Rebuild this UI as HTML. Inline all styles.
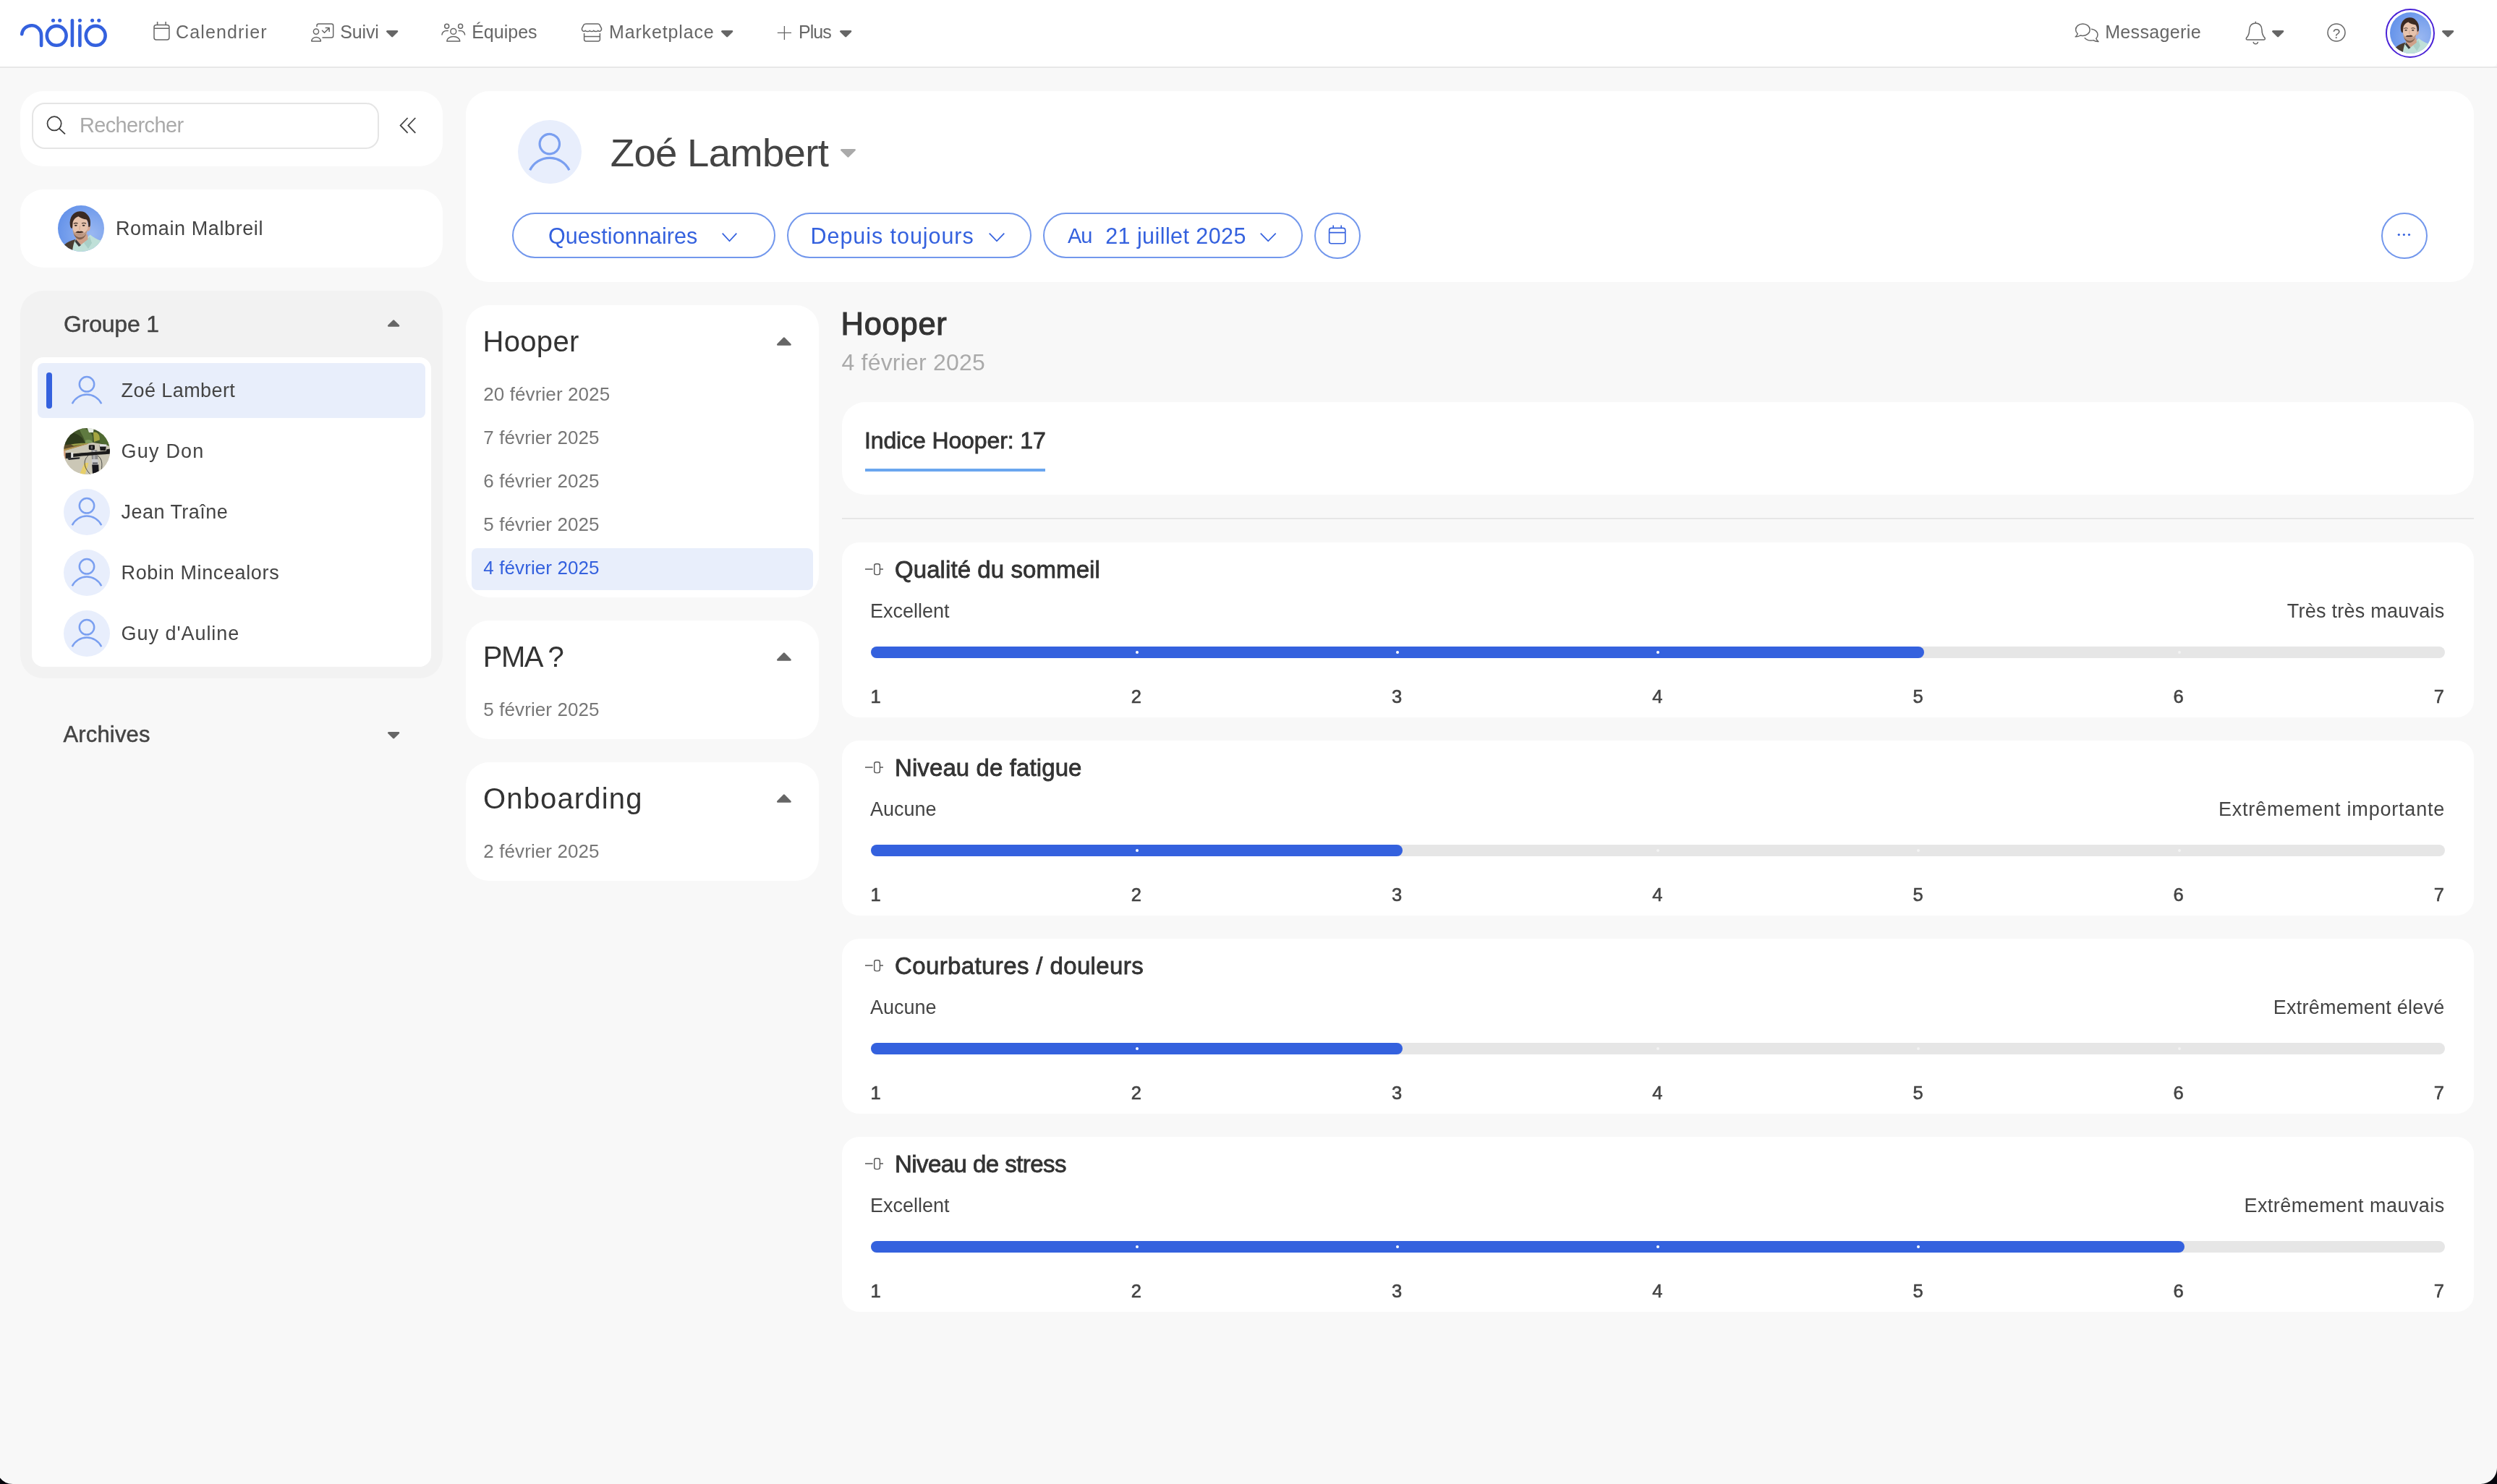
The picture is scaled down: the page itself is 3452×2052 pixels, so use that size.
<!DOCTYPE html>
<html lang="fr"><head><meta charset="utf-8"><title>Nolio</title>
<style>
html,body{margin:0;padding:0;overflow:hidden;}
html{width:3452px;height:2052px;}
body{width:3452px;height:2052px;position:relative;overflow:hidden;background:#f8f8f8;font-family:"Liberation Sans",sans-serif;}
.b{position:absolute;display:block;box-sizing:border-box;}
.t{position:absolute;white-space:nowrap;margin:0;padding:0;}
</style></head><body><div id="app" style="position:absolute;left:0;top:0;width:3452px;height:2052px;will-change:transform;overflow:hidden;">
<div class="b" style="left:0px;top:0px;width:3452px;height:92px;background:#fff;border-radius:0px;border-bottom-right-radius:6px;"></div>
<div class="b" style="left:0px;top:92px;width:3452px;height:2px;background:#e7e7e7;border-radius:0px;"></div>
<svg class="b" style="left:20px;top:15px;" width="140" height="60" viewBox="0 0 140 60"><g fill="none" stroke="#3461de" stroke-width="4.6" stroke-linecap="round">
<path d="M10.2 32.2 A13.5 13.5 0 0 1 37.1 34.3 L37.1 47.9"/>
<circle cx="58.2" cy="34.35" r="13.45"/>
<path d="M79.9 13.3 L79.9 47.9"/>
<path d="M90.4 20.9 L90.4 47.9"/>
<circle cx="112.2" cy="34.35" r="13.45"/>
</g><g fill="#3461de">
<circle cx="53.5" cy="13.3" r="2.55"/><circle cx="62.7" cy="13.3" r="2.55"/>
<circle cx="90.4" cy="13.3" r="2.55"/>
<circle cx="107.6" cy="13.3" r="2.55"/><circle cx="116.8" cy="13.3" r="2.55"/></g></svg>
<svg class="b" style="left:210px;top:28px;" width="28" height="30" viewBox="0 0 28 30"><g fill="none" stroke="#666" stroke-width="1.5" stroke-linejoin="round">
<rect x="3" y="6.4" width="20.9" height="20.7" rx="3"/>
<path d="M3 11.2 H23.9 M7.6 2 V6.4 M19.1 2 V6.4"/></g></svg>
<div class="t" style="font-size:25px;line-height:25px;top:32.33px;color:#666;letter-spacing:1.15px;left:243.00px;">Calendrier</div>
<svg class="b" style="left:428px;top:30px;" width="36" height="30" viewBox="0 0 36 30"><g fill="none" stroke="#666" stroke-width="1.5" stroke-linejoin="round" stroke-linecap="round">
<path d="M10 6.5 V5.5 a2.5 2.5 0 0 1 2.5 -2.5 H30.2 a2.5 2.5 0 0 1 2.5 2.5 V19.5 a2.5 2.5 0 0 1 -2.5 2.5 H18"/>
<circle cx="9" cy="13.6" r="3.6"/>
<path d="M2.8 27 a6.3 5.6 0 0 1 12.6 0 Z"/>
<path d="M17.5 12.2 L20.5 15.2 L27 8.8 M22.3 8.6 H27.2 V13.4"/></g></svg>
<div class="t" style="font-size:25px;line-height:25px;top:32.33px;color:#666;letter-spacing:-0.15px;left:470.30px;">Suivi</div>
<svg class="b" style="left:533.2px;top:41.0px;" width="18.3" height="11.8" viewBox="0 0 18.3 11.8"><path d="M2.3 2.3 H16.0 L9.15 9.175 Z" fill="#666" stroke="#666" stroke-width="2.6" stroke-linejoin="round"/></svg>
<svg class="b" style="left:608px;top:30px;" width="38" height="30" viewBox="0 0 38 30"><g fill="none" stroke="#666" stroke-width="1.5" stroke-linecap="round" stroke-linejoin="round">
<circle cx="18.8" cy="13.4" r="3.9"/>
<path d="M9.8 27 a9 6.6 0 0 1 18 0 Z"/>
<circle cx="9.7" cy="6.3" r="3.0"/>
<circle cx="28.6" cy="6.3" r="3.0"/>
<path d="M3 18 a6.2 5.6 0 0 1 6.2 -5.4 h2.2"/>
<path d="M34.6 18 a6.2 5.6 0 0 0 -6.2 -5.4 h-2.2"/></g></svg>
<div class="t" style="font-size:25px;line-height:25px;top:32.33px;color:#666;left:652.20px;">Équipes</div>
<svg class="b" style="left:803px;top:30px;" width="32" height="30" viewBox="0 0 32 30"><g fill="none" stroke="#666" stroke-width="1.5" stroke-linejoin="round" stroke-linecap="round">
<path d="M7.4 3 H23.6 Q25.2 3 26 4.4 L28.3 8.8 Q29.2 11.4 27.2 12.9 Q25.4 13.9 23.6 12.4 Q22.6 13.6 20.6 13.6 Q18.8 13.6 17.6 12.4 Q16.6 13.6 15.1 13.6 Q13.4 13.6 12.3 12.4 Q11.2 13.6 9.4 13.6 Q7.4 13.6 6.4 12.4 Q4.6 13.9 2.8 12.9 Q0.8 11.4 1.7 8.8 L4 4.4 Q4.8 3 7.4 3 Z"/>
<path d="M4.6 16.4 V24.5 a2.4 2.4 0 0 0 2.4 2.4 H24 a2.4 2.4 0 0 0 2.4 -2.4 V16.4 M4.6 20.6 H26.4"/></g></svg>
<div class="t" style="font-size:25px;line-height:25px;top:32.33px;color:#666;letter-spacing:0.85px;left:842.00px;">Marketplace</div>
<svg class="b" style="left:995.6px;top:41.0px;" width="18.3" height="11.8" viewBox="0 0 18.3 11.8"><path d="M2.3 2.3 H16.0 L9.15 9.175 Z" fill="#666" stroke="#666" stroke-width="2.6" stroke-linejoin="round"/></svg>
<svg class="b" style="left:1072px;top:33px;" width="26" height="26" viewBox="0 0 26 26"><path d="M2.8 12.4 H22 M12.4 3 V22" fill="none" stroke="#666" stroke-width="1.3"/></svg>
<div class="t" style="font-size:25px;line-height:25px;top:32.33px;color:#666;letter-spacing:-1.0px;left:1104.00px;">Plus</div>
<svg class="b" style="left:1159.9px;top:41.0px;" width="18.3" height="11.8" viewBox="0 0 18.3 11.8"><path d="M2.3 2.3 H16.0 L9.15 9.175 Z" fill="#666" stroke="#666" stroke-width="2.6" stroke-linejoin="round"/></svg>
<svg class="b" style="left:2866px;top:30px;" width="38" height="30" viewBox="0 0 38 30"><g fill="none" stroke="#666" stroke-width="1.5" stroke-linejoin="round" stroke-linecap="round">
<path d="M13.4 3 C7.8 3 3.6 6.6 3.6 11 C3.6 13.2 4.6 15.2 6.2 16.6 C5.8 18.4 4.8 19.8 3.2 20.8 C6 20.9 8.2 20.2 10 19 C11 19.3 12.2 19.4 13.4 19.4 C19 19.4 23.2 15.6 23.2 11 C23.2 6.6 19 3 13.4 3 Z"/>
<path d="M25.6 10.2 C30.4 10.8 34 14 34 18 C34 20 33.2 21.8 31.8 23.2 C32.4 24.9 33.4 26.3 35 27.5 C32.2 27.6 29.8 26.9 28 25.6 C27 25.9 25.8 26 24.6 26 C21 26 17.8 24.6 16.2 22.6"/></g></svg>
<div class="t" style="font-size:25px;line-height:25px;top:32.33px;color:#666;letter-spacing:0.35px;left:2910.20px;">Messagerie</div>
<svg class="b" style="left:3102px;top:27px;" width="34" height="38" viewBox="0 0 34 38"><g fill="none" stroke="#666" stroke-width="1.5" stroke-linejoin="round" stroke-linecap="round">
<path d="M16.3 3.2 V5 M16.3 5 C10.6 5 7.6 9.4 7.6 14.6 C7.6 19.4 6.6 22.4 3.6 25.4 Q2.6 27.8 4.8 28.1 H27.8 Q30 27.8 29 25.4 C26 22.4 25 19.4 25 14.6 C25 9.4 22 5 16.3 5 Z"/>
<path d="M13.2 31.4 a3.2 3.2 0 0 0 6.2 0"/></g></svg>
<svg class="b" style="left:3139.7px;top:41.0px;" width="18.3" height="11.8" viewBox="0 0 18.3 11.8"><path d="M2.3 2.3 H16.0 L9.15 9.175 Z" fill="#666" stroke="#666" stroke-width="2.6" stroke-linejoin="round"/></svg>
<svg class="b" style="left:3214px;top:29px;" width="32" height="32" viewBox="0 0 32 32"><circle cx="16" cy="16" r="12" fill="none" stroke="#666" stroke-width="1.5"/></svg>
<div class="t" style="font-size:19px;line-height:19px;top:37.21px;color:#666;left:3170.00px;width:120px;text-align:center;">?</div>
<div class="b" style="left:3298px;top:11.7px;width:68px;height:68px;background:transparent;border-radius:34px;border:2.4px solid #4a22d6;"></div>
<svg class="b" style="left:3303.5px;top:17.2px;" width="57" height="57" viewBox="0 0 64 64"><defs><clipPath id="c3303"><circle cx="32" cy="32" r="32"/></clipPath>
<radialGradient id="g3303" cx="0.72" cy="0.62" r="0.75"><stop offset="0" stop-color="#9ab8f1"/><stop offset="1" stop-color="#6593ea"/></radialGradient>
<filter id="f3303" x="-10%" y="-10%" width="120%" height="120%"><feGaussianBlur stdDeviation="0.55"/></filter></defs>
<g clip-path="url(#c3303)"><rect width="64" height="64" fill="url(#g3303)"/>
<g filter="url(#f3303)">
<path d="M9 54.5 C13 50.5 19 48.5 24 47 L30 66 H10 Z" fill="#4a3d31"/>
<path d="M20 64 C21 55 22.5 50 24.5 47 C30 50 36 48 41 44 L44.5 40.5 C49 44 54 47 59 48.6 L64 50 V66 H20 Z" fill="#bfe0d8"/>
<path d="M36 52 L44 43 L47 52 L42 60 Z" fill="#a9cfc7"/>
<path d="M25 44 L41 40 L41.5 47 L32 54.5 L25 49 Z" fill="#cfa088"/>
<path d="M25 47 L32 55 L29 57 L23.5 50 Z" fill="#3b3a3a"/>
<path d="M41.3 28 C44 26.5 45.5 29 44.6 32 C44 35 42.5 36 41 35.5 Z" fill="#d9a88f"/>
<path d="M20 24 C20 16 25 13 31 13.5 C38 14 41.5 19 41.5 27 C41.5 34 40.5 39 38 42.5 C35.5 46 32.5 47 30 47 C27 47 24.5 45 22.5 41 C20.8 37.5 20 31 20 24 Z" fill="#e7c3ac"/>
<path d="M20.6 33 C21 41 25 47.2 30.2 47.2 C35.5 47.2 40 41.5 41 33 C39 37 36 38.6 33.5 38.9 L35.7 37.3 C33.6 35.4 31.2 35.6 30 36.2 C28.8 35.6 26.5 35.4 24.1 37.6 L26.5 38.9 C24 38.6 22 37 20.6 33 Z" fill="#8a6654" opacity=".45"/>
<path d="M21.5 38 C23 44 27 47.2 30.2 47.2 C33.5 47.2 37.5 44.5 39.5 39 C37.5 42.5 34 44.3 30.5 44.3 C27 44.3 23.5 42 21.5 38 Z" fill="#6f5142" opacity=".8"/>
<path d="M16.8 27 C15.6 17 21 8.8 30 8.2 C35 7.9 38 9.5 40 12 C44 15.5 45.6 21 44.9 27 C44.6 29.5 43.2 30.6 42.3 29.5 C42.4 24.5 41.5 21.5 39.5 19.5 C35.5 18.8 31 17.5 28.5 15.2 C25 16.5 21.6 19 20.6 24 C20.2 28 20.4 30.5 19.6 32 C18 31.6 17.1 29.8 16.8 27 Z" fill="#3a2a23"/>
<path d="M24.1 37.6 C26.5 35.4 28.8 35.6 30 36.2 C31.2 35.6 33.6 35.4 35.7 37.3 C33.5 37.9 31.5 38 30 38 C28.3 38 26 38.1 24.1 37.6 Z" fill="#38251f"/>
<path d="M27 39.6 C29 40.4 31.2 40.4 33 39.6 C31.5 40.9 28.6 40.9 27 39.6 Z" fill="#b8746c"/>
<path d="M21.8 25.3 C23.6 24.2 26 24.2 27.6 25 M33 25 C34.8 24.1 37.2 24.2 39 25.3" stroke="#3a2a23" stroke-width="1.1" fill="none"/>
<ellipse cx="24.8" cy="27.8" rx="1.9" ry="0.95" fill="#2e2522"/><ellipse cx="35.6" cy="27.8" rx="1.9" ry="0.95" fill="#2e2522"/>
<path d="M30.6 28 C30 31 29.6 33 30.4 34.2" stroke="#caa08a" stroke-width="0.9" fill="none"/>
</g></g></svg>
<svg class="b" style="left:3374.7px;top:41.0px;" width="18.3" height="11.8" viewBox="0 0 18.3 11.8"><path d="M2.3 2.3 H16.0 L9.15 9.175 Z" fill="#666" stroke="#666" stroke-width="2.6" stroke-linejoin="round"/></svg>
<div class="b" style="left:28px;top:126px;width:584px;height:104px;background:#fff;border-radius:32px;"></div>
<div class="b" style="left:44px;top:142px;width:480px;height:64px;background:#fff;border-radius:18px;border:2px solid #e5e5e5;"></div>
<svg class="b" style="left:60px;top:156px;" width="36" height="36" viewBox="0 0 36 36"><circle cx="15.1" cy="14.8" r="9.6" fill="none" stroke="#3c3c3c" stroke-width="1.75"/><path d="M22 21.8 L30 29.4" stroke="#3c3c3c" stroke-width="1.75" fill="none"/></svg>
<div class="t" style="font-size:29px;line-height:29px;top:159.45px;color:#aaa;letter-spacing:-0.65px;left:110.00px;">Rechercher</div>
<svg class="b" style="left:550px;top:160px;" width="28" height="28" viewBox="0 0 28 28"><path d="M13.6 3 L3.6 13.4 L13.6 23.8 M24.3 3 L14.3 13.4 L24.3 23.8" fill="none" stroke="#444" stroke-width="1.8"/></svg>
<div class="b" style="left:28px;top:262px;width:584px;height:108px;background:#fff;border-radius:32px;"></div>
<svg class="b" style="left:80px;top:284px;" width="64" height="64" viewBox="0 0 64 64"><defs><clipPath id="c80"><circle cx="32" cy="32" r="32"/></clipPath>
<radialGradient id="g80" cx="0.72" cy="0.62" r="0.75"><stop offset="0" stop-color="#9ab8f1"/><stop offset="1" stop-color="#6593ea"/></radialGradient>
<filter id="f80" x="-10%" y="-10%" width="120%" height="120%"><feGaussianBlur stdDeviation="0.55"/></filter></defs>
<g clip-path="url(#c80)"><rect width="64" height="64" fill="url(#g80)"/>
<g filter="url(#f80)">
<path d="M9 54.5 C13 50.5 19 48.5 24 47 L30 66 H10 Z" fill="#4a3d31"/>
<path d="M20 64 C21 55 22.5 50 24.5 47 C30 50 36 48 41 44 L44.5 40.5 C49 44 54 47 59 48.6 L64 50 V66 H20 Z" fill="#bfe0d8"/>
<path d="M36 52 L44 43 L47 52 L42 60 Z" fill="#a9cfc7"/>
<path d="M25 44 L41 40 L41.5 47 L32 54.5 L25 49 Z" fill="#cfa088"/>
<path d="M25 47 L32 55 L29 57 L23.5 50 Z" fill="#3b3a3a"/>
<path d="M41.3 28 C44 26.5 45.5 29 44.6 32 C44 35 42.5 36 41 35.5 Z" fill="#d9a88f"/>
<path d="M20 24 C20 16 25 13 31 13.5 C38 14 41.5 19 41.5 27 C41.5 34 40.5 39 38 42.5 C35.5 46 32.5 47 30 47 C27 47 24.5 45 22.5 41 C20.8 37.5 20 31 20 24 Z" fill="#e7c3ac"/>
<path d="M20.6 33 C21 41 25 47.2 30.2 47.2 C35.5 47.2 40 41.5 41 33 C39 37 36 38.6 33.5 38.9 L35.7 37.3 C33.6 35.4 31.2 35.6 30 36.2 C28.8 35.6 26.5 35.4 24.1 37.6 L26.5 38.9 C24 38.6 22 37 20.6 33 Z" fill="#8a6654" opacity=".45"/>
<path d="M21.5 38 C23 44 27 47.2 30.2 47.2 C33.5 47.2 37.5 44.5 39.5 39 C37.5 42.5 34 44.3 30.5 44.3 C27 44.3 23.5 42 21.5 38 Z" fill="#6f5142" opacity=".8"/>
<path d="M16.8 27 C15.6 17 21 8.8 30 8.2 C35 7.9 38 9.5 40 12 C44 15.5 45.6 21 44.9 27 C44.6 29.5 43.2 30.6 42.3 29.5 C42.4 24.5 41.5 21.5 39.5 19.5 C35.5 18.8 31 17.5 28.5 15.2 C25 16.5 21.6 19 20.6 24 C20.2 28 20.4 30.5 19.6 32 C18 31.6 17.1 29.8 16.8 27 Z" fill="#3a2a23"/>
<path d="M24.1 37.6 C26.5 35.4 28.8 35.6 30 36.2 C31.2 35.6 33.6 35.4 35.7 37.3 C33.5 37.9 31.5 38 30 38 C28.3 38 26 38.1 24.1 37.6 Z" fill="#38251f"/>
<path d="M27 39.6 C29 40.4 31.2 40.4 33 39.6 C31.5 40.9 28.6 40.9 27 39.6 Z" fill="#b8746c"/>
<path d="M21.8 25.3 C23.6 24.2 26 24.2 27.6 25 M33 25 C34.8 24.1 37.2 24.2 39 25.3" stroke="#3a2a23" stroke-width="1.1" fill="none"/>
<ellipse cx="24.8" cy="27.8" rx="1.9" ry="0.95" fill="#2e2522"/><ellipse cx="35.6" cy="27.8" rx="1.9" ry="0.95" fill="#2e2522"/>
<path d="M30.6 28 C30 31 29.6 33 30.4 34.2" stroke="#caa08a" stroke-width="0.9" fill="none"/>
</g></g></svg>
<div class="t" style="font-size:27px;line-height:27px;top:302.64px;color:#444;letter-spacing:0.6px;left:160.00px;">Romain Malbreil</div>
<div class="b" style="left:28px;top:402px;width:584px;height:536px;background:#f2f2f2;border-radius:32px;"></div>
<div class="t" style="font-size:32px;line-height:32px;top:431.81px;color:#444;letter-spacing:-0.2px;-webkit-text-stroke:0.45px #444;left:88.00px;">Groupe 1</div>
<svg class="b" style="left:534.8px;top:441.0px;" width="18.3" height="11.8" viewBox="0 0 18.3 11.8"><path d="M2.3 9.5 H16.0 L9.15 2.625 Z" fill="#666" stroke="#666" stroke-width="2.6" stroke-linejoin="round"/></svg>
<div class="b" style="left:44px;top:494px;width:552px;height:428px;background:#fff;border-radius:16px;"></div>
<div class="b" style="left:52px;top:502px;width:536px;height:76px;background:#e8eefb;border-radius:8px;"></div>
<div class="b" style="left:64px;top:515px;width:8px;height:50px;background:#3461de;border-radius:4px;"></div>
<svg class="b" style="left:80.0px;top:500.0px;" width="80.0" height="80.0" viewBox="0 0 80.0 80.0"><circle cx="40.00" cy="31.30" r="10.20" fill="none" stroke="#7a9ff0" stroke-width="2.5"/><path d="M19.80 58.20 A22.49 22.49 0 0 1 60.20 58.20" fill="none" stroke="#7a9ff0" stroke-width="2.5" stroke-linecap="butt"/></svg>
<div class="t" style="font-size:27px;line-height:27px;top:527.04px;color:#444;letter-spacing:0.42px;left:167.60px;">Zoé Lambert</div>
<svg class="b" style="left:88px;top:592px;" width="64" height="64" viewBox="0 0 64 64"><defs><clipPath id="cb"><circle cx="32" cy="32" r="32"/></clipPath>
<filter id="fb" x="-10%" y="-10%" width="120%" height="120%"><feGaussianBlur stdDeviation="0.7"/></filter>
<filter id="fb2" x="-10%" y="-10%" width="120%" height="120%"><feGaussianBlur stdDeviation="0.35"/></filter></defs>
<g clip-path="url(#cb)"><rect width="64" height="64" fill="#cbc7b6"/>
<g filter="url(#fb)">
<path d="M-2 -2 H66 V24 L40 20 L30 21 L-2 30 Z" fill="#43572a"/>
<path d="M-2 8 C8 4 18 6 26 14 L30 21 L-2 30 Z" fill="#2f3b1c"/>
<path d="M22 2 C30 -2 38 4 40 12 L40 20 L30 20 C28 12 24 8 22 2 Z" fill="#5f7a40"/>
<path d="M32 -2 H42 L41 6 L35 6 Z" fill="#e9efe6"/>
<path d="M41 6 C46 4 50 9 51 16 L42 19 Z" fill="#a5a640"/>
<path d="M48 2 C56 4 62 12 66 20 V26 L50 20 C50 12 49 6 48 2 Z" fill="#4f6a30"/>
<path d="M30 17 C34 15 39 16 40 20 L30 21 Z" fill="#7b9a58"/>
<path d="M-2 24 C8 22 20 21 30 21 L34 21.5 L-2 32 Z" fill="#5c4d2a"/>
<path d="M10 22.5 C18 21 26 20.5 33 20.8 L34 21.6 L14 24.5 Z" fill="#9aa04a"/>
<path d="M-2 29.6 L32 21.2 L35 21.8 L-2 32.4 Z" fill="#b3924f"/>
<path d="M-2 32.4 L35 21.8 L42 20.5 L66 26 V66 H-2 Z" fill="#cbc7b6"/>
<path d="M29 48 L34.5 48 L29 66 L21 66 Z" fill="#e7cf6b"/>
</g>
<g filter="url(#fb2)">
<path d="M34 38 C27 44 27 54 37 64 M47 38 C54 43 53 50 52.5 57" fill="none" stroke="#2a2a2a" stroke-width=".8"/>
<path d="M38.2 30 H46.2 L47.4 44 H39 Z" fill="#8d8d8d"/>
<path d="M40.5 31 H43 L43.6 43 H41 Z" fill="#b5b5b5"/>
<path d="M38.6 43 H47.6 L48 50.5 H39.4 Z" fill="#c9cacc"/>
<path d="M40 47.5 H47 V49.5 H40 Z" fill="#55565a"/>
<path d="M39.2 50.5 H48.2 L48.8 63 H40 Z" fill="#15151c"/>
<path d="M2 36.2 C12 35.4 30 33.8 66 31 V35.6 C40 37.4 20 39 11 40.2 L2.4 41.6 Z" fill="#1b1b1b"/>
<path d="M2 34.4 L10.4 33.8 V41 L2.6 42 Z" fill="#202020"/>
<path d="M10.2 33.6 L13.2 33.4 V40.8 L10.2 41.2 Z" fill="#e4e4e4"/>
<path d="M5 41.6 L22.5 40.2 L22 42.4 L7 44 Z" fill="#26282c"/>
<path d="M-1 31.5 H2.6 V43.5 H-1 Z" fill="#d7a07a"/>
<rect x="34.8" y="23.2" width="8.2" height="6.8" rx="1.4" fill="#141414"/>
<rect x="37.6" y="24.6" width="2.4" height="4" fill="#6d6d6d"/>
<path d="M49.6 23.4 H59 L58 31 H50.6 Z" fill="#1f1f1f"/>
<path d="M50 22.6 H59.4 L59 25.6 H50 Z" fill="#e3e5e8"/>
<path d="M59 29.5 L66 28 V33 L59 33 Z" fill="#1b1b1b"/>
</g></g></svg>
<div class="t" style="font-size:27px;line-height:27px;top:611.04px;color:#444;letter-spacing:1.2px;left:167.60px;">Guy Don</div>
<div class="b" style="left:88px;top:676px;width:64px;height:64px;background:#e8eefc;border-radius:32px;"></div>
<svg class="b" style="left:80.0px;top:668.0px;" width="80.0" height="80.0" viewBox="0 0 80.0 80.0"><circle cx="40.00" cy="31.30" r="10.20" fill="none" stroke="#7a9ff0" stroke-width="2.5"/><path d="M19.80 58.20 A22.49 22.49 0 0 1 60.20 58.20" fill="none" stroke="#7a9ff0" stroke-width="2.5" stroke-linecap="butt"/></svg>
<div class="t" style="font-size:27px;line-height:27px;top:695.04px;color:#444;letter-spacing:0.45px;left:167.60px;">Jean Traîne</div>
<div class="b" style="left:88px;top:760px;width:64px;height:64px;background:#e8eefc;border-radius:32px;"></div>
<svg class="b" style="left:80.0px;top:752.0px;" width="80.0" height="80.0" viewBox="0 0 80.0 80.0"><circle cx="40.00" cy="31.30" r="10.20" fill="none" stroke="#7a9ff0" stroke-width="2.5"/><path d="M19.80 58.20 A22.49 22.49 0 0 1 60.20 58.20" fill="none" stroke="#7a9ff0" stroke-width="2.5" stroke-linecap="butt"/></svg>
<div class="t" style="font-size:27px;line-height:27px;top:779.04px;color:#444;letter-spacing:0.63px;left:167.60px;">Robin Mincealors</div>
<div class="b" style="left:88px;top:844px;width:64px;height:64px;background:#e8eefc;border-radius:32px;"></div>
<svg class="b" style="left:80.0px;top:836.0px;" width="80.0" height="80.0" viewBox="0 0 80.0 80.0"><circle cx="40.00" cy="31.30" r="10.20" fill="none" stroke="#7a9ff0" stroke-width="2.5"/><path d="M19.80 58.20 A22.49 22.49 0 0 1 60.20 58.20" fill="none" stroke="#7a9ff0" stroke-width="2.5" stroke-linecap="butt"/></svg>
<div class="t" style="font-size:27px;line-height:27px;top:863.04px;color:#444;letter-spacing:0.95px;left:167.60px;">Guy d'Auline</div>
<div class="t" style="font-size:31px;line-height:31px;top:1000.25px;color:#444;letter-spacing:0.15px;-webkit-text-stroke:0.45px #444;left:87.50px;">Archives</div>
<svg class="b" style="left:534.8px;top:1011.0px;" width="18.3" height="11.8" viewBox="0 0 18.3 11.8"><path d="M2.3 2.3 H16.0 L9.15 9.175 Z" fill="#666" stroke="#666" stroke-width="2.6" stroke-linejoin="round"/></svg>
<div class="b" style="left:644px;top:126px;width:2776px;height:264px;background:#fff;border-radius:32px;"></div>
<div class="b" style="left:716px;top:166px;width:88px;height:88px;background:#e8eefc;border-radius:44px;"></div>
<svg class="b" style="left:706.2px;top:156.5px;" width="107.6" height="107.6" viewBox="0 0 107.6 107.6"><circle cx="53.80" cy="42.10" r="13.72" fill="none" stroke="#7a9ff0" stroke-width="3.2"/><path d="M26.63 78.28 A30.25 30.25 0 0 1 80.97 78.28" fill="none" stroke="#7a9ff0" stroke-width="3.2" stroke-linecap="butt"/></svg>
<div class="t" style="font-size:54.5px;line-height:54.5px;top:184.76px;color:#444;letter-spacing:-0.7px;left:843.80px;">Zoé Lambert</div>
<svg class="b" style="left:1160.8px;top:205.0px;" width="22.9" height="14.0" viewBox="0 0 22.9 14.0"><path d="M2.3 2.3 H20.599999999999998 L11.45 11.375 Z" fill="#aaa" stroke="#aaa" stroke-width="2.6" stroke-linejoin="round"/></svg>
<div class="b" style="left:708px;top:294.2px;width:364px;height:63.3px;background:#fff;border-radius:32px;border:2px solid #7297ec;"></div>
<div class="b" style="left:1088.4px;top:294.2px;width:337.4px;height:63.3px;background:#fff;border-radius:32px;border:2px solid #7297ec;"></div>
<div class="b" style="left:1442.2px;top:294.2px;width:358.4px;height:63.3px;background:#fff;border-radius:32px;border:2px solid #7297ec;"></div>
<div class="t" style="font-size:30.5px;line-height:30.5px;top:311.08px;color:#3461de;letter-spacing:0.1px;left:757.90px;">Questionnaires</div>
<svg class="b" style="left:996.3px;top:320.0px;" width="25" height="16" viewBox="0 0 25 16"><path d="M2.7 2.7 L12.5 13.3 L22.3 2.7" fill="none" stroke="#3461de" stroke-width="1.7" stroke-linecap="butt" stroke-linejoin="miter"/></svg>
<div class="t" style="font-size:30.5px;line-height:30.5px;top:311.08px;color:#3461de;letter-spacing:0.95px;left:1120.50px;">Depuis toujours</div>
<svg class="b" style="left:1365.3px;top:320.0px;" width="26.0" height="16" viewBox="0 0 26.0 16"><path d="M2.7 2.7 L13.0 13.3 L23.3 2.7" fill="none" stroke="#3461de" stroke-width="1.7" stroke-linecap="butt" stroke-linejoin="miter"/></svg>
<div class="t" style="font-size:29px;line-height:29px;top:312.35px;color:#3461de;letter-spacing:-1.0px;left:1476.00px;">Au</div>
<div class="t" style="font-size:30.5px;line-height:30.5px;top:311.08px;color:#3461de;letter-spacing:0.43px;left:1528.20px;">21 juillet 2025</div>
<svg class="b" style="left:1739.8px;top:320.0px;" width="26.4" height="16" viewBox="0 0 26.4 16"><path d="M2.7 2.7 L13.2 13.3 L23.7 2.7" fill="none" stroke="#3461de" stroke-width="1.7" stroke-linecap="butt" stroke-linejoin="miter"/></svg>
<div class="b" style="left:1817.3px;top:294.2px;width:63.6px;height:63.4px;background:#fff;border-radius:32px;border:2px solid #7297ec;"></div>
<svg class="b" style="left:1834px;top:308px;" width="30" height="32" viewBox="0 0 30 32"><g fill="none" stroke="#3461de" stroke-width="1.6" stroke-linejoin="round">
<rect x="3.6" y="7.4" width="22.2" height="21.4" rx="3"/><path d="M3.6 13.6 H25.8 M9.2 3.4 V7.4 M20.2 3.4 V7.4"/></g></svg>
<div class="b" style="left:3292px;top:294.2px;width:64px;height:63.4px;background:#fff;border-radius:32px;border:2px solid #7297ec;"></div>
<svg class="b" style="left:3310px;top:320px;" width="30" height="12" viewBox="0 0 30 12"><g fill="#3461de"><circle cx="6.3" cy="4.5" r="1.6"/><circle cx="13.4" cy="4.5" r="1.6"/><circle cx="20.5" cy="4.5" r="1.6"/></g></svg>
<div class="b" style="left:644px;top:422.2px;width:488px;height:403.6px;background:#fff;border-radius:32px;"></div>
<div class="t" style="font-size:40px;line-height:40px;top:452.33px;color:#333;letter-spacing:0.3px;left:667.60px;">Hooper</div>
<svg class="b" style="left:1073.0px;top:465.0px;" width="21.8" height="13.8" viewBox="0 0 21.8 13.8"><path d="M2.3 11.5 H19.5 L10.9 2.625 Z" fill="#666" stroke="#666" stroke-width="2.6" stroke-linejoin="round"/></svg>
<div class="b" style="left:651.5px;top:758px;width:472.5px;height:58px;background:#e8eefb;border-radius:8px;"></div>
<div class="t" style="font-size:26px;line-height:26px;top:531.79px;color:#777;letter-spacing:0.1px;left:668.30px;">20 février 2025</div>
<div class="t" style="font-size:26px;line-height:26px;top:591.89px;color:#777;letter-spacing:0.1px;left:668.30px;">7 février 2025</div>
<div class="t" style="font-size:26px;line-height:26px;top:651.99px;color:#777;letter-spacing:0.1px;left:668.30px;">6 février 2025</div>
<div class="t" style="font-size:26px;line-height:26px;top:712.09px;color:#777;letter-spacing:0.1px;left:668.30px;">5 février 2025</div>
<div class="t" style="font-size:26px;line-height:26px;top:772.19px;color:#3461de;letter-spacing:0.1px;left:668.30px;">4 février 2025</div>
<div class="b" style="left:644px;top:858.1px;width:488px;height:163.8px;background:#fff;border-radius:32px;"></div>
<div class="t" style="font-size:40px;line-height:40px;top:888.13px;color:#333;letter-spacing:-1.5px;left:667.80px;">PMA ?</div>
<svg class="b" style="left:1073.0px;top:901.2px;" width="21.8" height="13.8" viewBox="0 0 21.8 13.8"><path d="M2.3 11.5 H19.5 L10.9 2.625 Z" fill="#666" stroke="#666" stroke-width="2.6" stroke-linejoin="round"/></svg>
<div class="t" style="font-size:26px;line-height:26px;top:968.29px;color:#777;letter-spacing:0.1px;left:668.30px;">5 février 2025</div>
<div class="b" style="left:644px;top:1054.3px;width:488px;height:163.6px;background:#fff;border-radius:32px;"></div>
<div class="t" style="font-size:40px;line-height:40px;top:1084.23px;color:#333;letter-spacing:1.15px;left:668.00px;">Onboarding</div>
<svg class="b" style="left:1073.0px;top:1097.3px;" width="21.8" height="13.8" viewBox="0 0 21.8 13.8"><path d="M2.3 11.5 H19.5 L10.9 2.625 Z" fill="#666" stroke="#666" stroke-width="2.6" stroke-linejoin="round"/></svg>
<div class="t" style="font-size:26px;line-height:26px;top:1164.49px;color:#777;letter-spacing:0.1px;left:668.30px;">2 février 2025</div>
<div class="t" style="font-size:43.5px;line-height:43.5px;top:427.07px;color:#333;letter-spacing:0.7px;-webkit-text-stroke:1.1px #333;left:1162.60px;">Hooper</div>
<div class="t" style="font-size:32px;line-height:32px;top:485.41px;color:#aaa;letter-spacing:0.2px;left:1163.50px;">4 février 2025</div>
<div class="b" style="left:1164px;top:556px;width:2256px;height:128px;background:#fff;border-radius:32px;"></div>
<div class="t" style="font-size:32px;line-height:32px;top:593.21px;color:#333;letter-spacing:-0.12px;-webkit-text-stroke:0.8px #333;left:1195.00px;">Indice Hooper: 17</div>
<div class="b" style="left:1196px;top:648px;width:249px;height:4px;background:#6aa6ef;border-radius:0px;"></div>
<div class="b" style="left:1164px;top:716px;width:2256px;height:2px;background:#e6e6e6;border-radius:0px;"></div>
<div class="b" style="left:1164px;top:750px;width:2256px;height:242px;background:#fff;border-radius:24px;"></div>
<svg class="b" style="left:1194px;top:776px;" width="30" height="24" viewBox="0 0 30 24"><path d="M2 11 H12.6 M22.6 11 H27" stroke="#555" stroke-width="1.4" fill="none"/><rect x="14.7" y="3.7" width="7.7" height="14.9" rx="2.6" fill="none" stroke="#555" stroke-width="1.4"/></svg>
<div class="t" style="font-size:33px;line-height:33px;top:770.76px;color:#333;letter-spacing:0.08px;-webkit-text-stroke:0.8px #333;left:1237.00px;">Qualité du sommeil</div>
<div class="t" style="font-size:27px;line-height:27px;top:831.84px;color:#444;left:1203.00px;">Excellent</div>
<div class="t" style="font-size:27px;line-height:27px;top:831.84px;color:#444;letter-spacing:0.25px;right:72.45px;">Très très mauvais</div>
<div class="b" style="left:1204px;top:894px;width:2176px;height:16px;background:#e6e6e6;border-radius:8px;"></div>
<div class="b" style="left:1204px;top:894px;width:1455.7000000000003px;height:16px;background:#3461de;border-radius:8px;"></div>
<div class="b" style="left:1569.7px;top:900px;width:4px;height:4px;background:#fff;border-radius:2px;"></div>
<div class="b" style="left:1929.9px;top:900px;width:4px;height:4px;background:#fff;border-radius:2px;"></div>
<div class="b" style="left:2290.1px;top:900px;width:4px;height:4px;background:#fff;border-radius:2px;"></div>
<div class="b" style="left:3010.5px;top:900px;width:4px;height:4px;background:#f4f4f4;border-radius:2px;"></div>
<div class="t" style="font-size:25.5px;line-height:25.5px;top:951.11px;color:#444;-webkit-text-stroke:0.6px #444;left:1150.70px;width:120px;text-align:center;">1</div>
<div class="t" style="font-size:25.5px;line-height:25.5px;top:951.11px;color:#444;-webkit-text-stroke:0.6px #444;left:1510.90px;width:120px;text-align:center;">2</div>
<div class="t" style="font-size:25.5px;line-height:25.5px;top:951.11px;color:#444;-webkit-text-stroke:0.6px #444;left:1871.10px;width:120px;text-align:center;">3</div>
<div class="t" style="font-size:25.5px;line-height:25.5px;top:951.11px;color:#444;-webkit-text-stroke:0.6px #444;left:2231.30px;width:120px;text-align:center;">4</div>
<div class="t" style="font-size:25.5px;line-height:25.5px;top:951.11px;color:#444;-webkit-text-stroke:0.6px #444;left:2591.50px;width:120px;text-align:center;">5</div>
<div class="t" style="font-size:25.5px;line-height:25.5px;top:951.11px;color:#444;-webkit-text-stroke:0.6px #444;left:2951.70px;width:120px;text-align:center;">6</div>
<div class="t" style="font-size:25.5px;line-height:25.5px;top:951.11px;color:#444;-webkit-text-stroke:0.6px #444;left:3311.90px;width:120px;text-align:center;">7</div>
<div class="b" style="left:1164px;top:1024px;width:2256px;height:242px;background:#fff;border-radius:24px;"></div>
<svg class="b" style="left:1194px;top:1050px;" width="30" height="24" viewBox="0 0 30 24"><path d="M2 11 H12.6 M22.6 11 H27" stroke="#555" stroke-width="1.4" fill="none"/><rect x="14.7" y="3.7" width="7.7" height="14.9" rx="2.6" fill="none" stroke="#555" stroke-width="1.4"/></svg>
<div class="t" style="font-size:33px;line-height:33px;top:1044.76px;color:#333;letter-spacing:0.1px;-webkit-text-stroke:0.8px #333;left:1237.00px;">Niveau de fatigue</div>
<div class="t" style="font-size:27px;line-height:27px;top:1105.84px;color:#444;left:1203.00px;">Aucune</div>
<div class="t" style="font-size:27px;line-height:27px;top:1105.84px;color:#444;letter-spacing:0.8px;right:71.90px;">Extrêmement importante</div>
<div class="b" style="left:1204px;top:1168px;width:2176px;height:16px;background:#e6e6e6;border-radius:8px;"></div>
<div class="b" style="left:1204px;top:1168px;width:735.3000000000002px;height:16px;background:#3461de;border-radius:8px;"></div>
<div class="b" style="left:1569.7px;top:1174px;width:4px;height:4px;background:#fff;border-radius:2px;"></div>
<div class="b" style="left:2290.1px;top:1174px;width:4px;height:4px;background:#f4f4f4;border-radius:2px;"></div>
<div class="b" style="left:2650.3px;top:1174px;width:4px;height:4px;background:#f4f4f4;border-radius:2px;"></div>
<div class="b" style="left:3010.5px;top:1174px;width:4px;height:4px;background:#f4f4f4;border-radius:2px;"></div>
<div class="t" style="font-size:25.5px;line-height:25.5px;top:1225.11px;color:#444;-webkit-text-stroke:0.6px #444;left:1150.70px;width:120px;text-align:center;">1</div>
<div class="t" style="font-size:25.5px;line-height:25.5px;top:1225.11px;color:#444;-webkit-text-stroke:0.6px #444;left:1510.90px;width:120px;text-align:center;">2</div>
<div class="t" style="font-size:25.5px;line-height:25.5px;top:1225.11px;color:#444;-webkit-text-stroke:0.6px #444;left:1871.10px;width:120px;text-align:center;">3</div>
<div class="t" style="font-size:25.5px;line-height:25.5px;top:1225.11px;color:#444;-webkit-text-stroke:0.6px #444;left:2231.30px;width:120px;text-align:center;">4</div>
<div class="t" style="font-size:25.5px;line-height:25.5px;top:1225.11px;color:#444;-webkit-text-stroke:0.6px #444;left:2591.50px;width:120px;text-align:center;">5</div>
<div class="t" style="font-size:25.5px;line-height:25.5px;top:1225.11px;color:#444;-webkit-text-stroke:0.6px #444;left:2951.70px;width:120px;text-align:center;">6</div>
<div class="t" style="font-size:25.5px;line-height:25.5px;top:1225.11px;color:#444;-webkit-text-stroke:0.6px #444;left:3311.90px;width:120px;text-align:center;">7</div>
<div class="b" style="left:1164px;top:1298px;width:2256px;height:242px;background:#fff;border-radius:24px;"></div>
<svg class="b" style="left:1194px;top:1324px;" width="30" height="24" viewBox="0 0 30 24"><path d="M2 11 H12.6 M22.6 11 H27" stroke="#555" stroke-width="1.4" fill="none"/><rect x="14.7" y="3.7" width="7.7" height="14.9" rx="2.6" fill="none" stroke="#555" stroke-width="1.4"/></svg>
<div class="t" style="font-size:33px;line-height:33px;top:1318.76px;color:#333;letter-spacing:0.38px;-webkit-text-stroke:0.8px #333;left:1237.00px;">Courbatures / douleurs</div>
<div class="t" style="font-size:27px;line-height:27px;top:1379.84px;color:#444;left:1203.00px;">Aucune</div>
<div class="t" style="font-size:27px;line-height:27px;top:1379.84px;color:#444;letter-spacing:0.25px;right:72.45px;">Extrêmement élevé</div>
<div class="b" style="left:1204px;top:1442px;width:2176px;height:16px;background:#e6e6e6;border-radius:8px;"></div>
<div class="b" style="left:1204px;top:1442px;width:735.3000000000002px;height:16px;background:#3461de;border-radius:8px;"></div>
<div class="b" style="left:1569.7px;top:1448px;width:4px;height:4px;background:#fff;border-radius:2px;"></div>
<div class="b" style="left:2290.1px;top:1448px;width:4px;height:4px;background:#f4f4f4;border-radius:2px;"></div>
<div class="b" style="left:2650.3px;top:1448px;width:4px;height:4px;background:#f4f4f4;border-radius:2px;"></div>
<div class="b" style="left:3010.5px;top:1448px;width:4px;height:4px;background:#f4f4f4;border-radius:2px;"></div>
<div class="t" style="font-size:25.5px;line-height:25.5px;top:1499.11px;color:#444;-webkit-text-stroke:0.6px #444;left:1150.70px;width:120px;text-align:center;">1</div>
<div class="t" style="font-size:25.5px;line-height:25.5px;top:1499.11px;color:#444;-webkit-text-stroke:0.6px #444;left:1510.90px;width:120px;text-align:center;">2</div>
<div class="t" style="font-size:25.5px;line-height:25.5px;top:1499.11px;color:#444;-webkit-text-stroke:0.6px #444;left:1871.10px;width:120px;text-align:center;">3</div>
<div class="t" style="font-size:25.5px;line-height:25.5px;top:1499.11px;color:#444;-webkit-text-stroke:0.6px #444;left:2231.30px;width:120px;text-align:center;">4</div>
<div class="t" style="font-size:25.5px;line-height:25.5px;top:1499.11px;color:#444;-webkit-text-stroke:0.6px #444;left:2591.50px;width:120px;text-align:center;">5</div>
<div class="t" style="font-size:25.5px;line-height:25.5px;top:1499.11px;color:#444;-webkit-text-stroke:0.6px #444;left:2951.70px;width:120px;text-align:center;">6</div>
<div class="t" style="font-size:25.5px;line-height:25.5px;top:1499.11px;color:#444;-webkit-text-stroke:0.6px #444;left:3311.90px;width:120px;text-align:center;">7</div>
<div class="b" style="left:1164px;top:1572px;width:2256px;height:242px;background:#fff;border-radius:24px;"></div>
<svg class="b" style="left:1194px;top:1598px;" width="30" height="24" viewBox="0 0 30 24"><path d="M2 11 H12.6 M22.6 11 H27" stroke="#555" stroke-width="1.4" fill="none"/><rect x="14.7" y="3.7" width="7.7" height="14.9" rx="2.6" fill="none" stroke="#555" stroke-width="1.4"/></svg>
<div class="t" style="font-size:33px;line-height:33px;top:1592.76px;color:#333;letter-spacing:-0.55px;-webkit-text-stroke:0.8px #333;left:1237.00px;">Niveau de stress</div>
<div class="t" style="font-size:27px;line-height:27px;top:1653.84px;color:#444;left:1203.00px;">Excellent</div>
<div class="t" style="font-size:27px;line-height:27px;top:1653.84px;color:#444;letter-spacing:0.46px;right:72.24px;">Extrêmement mauvais</div>
<div class="b" style="left:1204px;top:1716px;width:2176px;height:16px;background:#e6e6e6;border-radius:8px;"></div>
<div class="b" style="left:1204px;top:1716px;width:1815.9px;height:16px;background:#3461de;border-radius:8px;"></div>
<div class="b" style="left:1569.7px;top:1722px;width:4px;height:4px;background:#fff;border-radius:2px;"></div>
<div class="b" style="left:1929.9px;top:1722px;width:4px;height:4px;background:#fff;border-radius:2px;"></div>
<div class="b" style="left:2290.1px;top:1722px;width:4px;height:4px;background:#fff;border-radius:2px;"></div>
<div class="b" style="left:2650.3px;top:1722px;width:4px;height:4px;background:#fff;border-radius:2px;"></div>
<div class="t" style="font-size:25.5px;line-height:25.5px;top:1773.11px;color:#444;-webkit-text-stroke:0.6px #444;left:1150.70px;width:120px;text-align:center;">1</div>
<div class="t" style="font-size:25.5px;line-height:25.5px;top:1773.11px;color:#444;-webkit-text-stroke:0.6px #444;left:1510.90px;width:120px;text-align:center;">2</div>
<div class="t" style="font-size:25.5px;line-height:25.5px;top:1773.11px;color:#444;-webkit-text-stroke:0.6px #444;left:1871.10px;width:120px;text-align:center;">3</div>
<div class="t" style="font-size:25.5px;line-height:25.5px;top:1773.11px;color:#444;-webkit-text-stroke:0.6px #444;left:2231.30px;width:120px;text-align:center;">4</div>
<div class="t" style="font-size:25.5px;line-height:25.5px;top:1773.11px;color:#444;-webkit-text-stroke:0.6px #444;left:2591.50px;width:120px;text-align:center;">5</div>
<div class="t" style="font-size:25.5px;line-height:25.5px;top:1773.11px;color:#444;-webkit-text-stroke:0.6px #444;left:2951.70px;width:120px;text-align:center;">6</div>
<div class="t" style="font-size:25.5px;line-height:25.5px;top:1773.11px;color:#444;-webkit-text-stroke:0.6px #444;left:3311.90px;width:120px;text-align:center;">7</div>
<svg class="b" style="left:0px;top:2022px;" width="30" height="30" viewBox="0 0 30 30"><path d="M0 21.4 A22.4 22.4 0 0 0 17.6 30 L0 30 Z" fill="#05050c"/></svg>
<svg class="b" style="left:3422px;top:2022px;" width="30" height="30" viewBox="0 0 30 30"><path d="M30 7.6 A22.4 22.4 0 0 1 7.6 30 L30 30 Z" fill="#05050c"/></svg>
</div></body></html>
